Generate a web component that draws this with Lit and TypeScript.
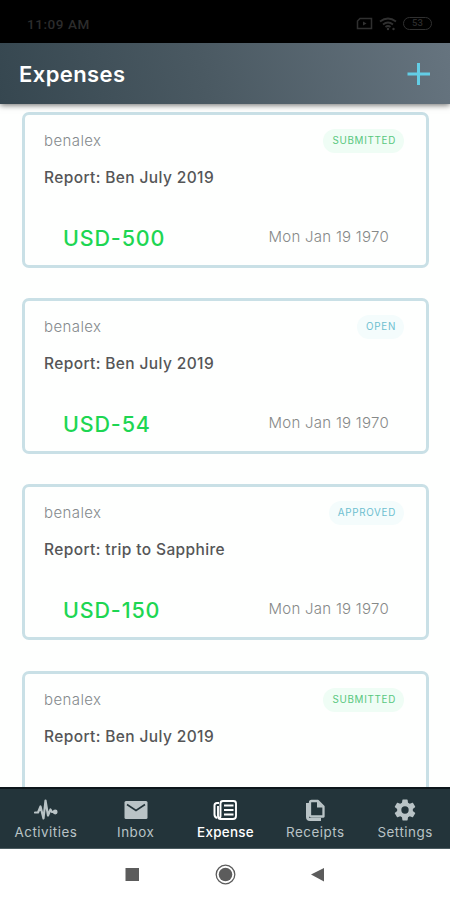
import { LitElement, html, css, svg, nothing } from "lit";
import { customElement, property } from "lit/decorators.js";

interface Expense {
  owner: string;
  title: string;
  amount?: string;
  date?: string;
  status: "SUBMITTED" | "OPEN" | "APPROVED";
}

const EXPENSES: Expense[] = [
  { owner: "benalex", title: "Report: Ben July 2019", amount: "USD-500", date: "Mon Jan 19 1970", status: "SUBMITTED" },
  { owner: "benalex", title: "Report: Ben July 2019", amount: "USD-54", date: "Mon Jan 19 1970", status: "OPEN" },
  { owner: "benalex", title: "Report: trip to Sapphire", amount: "USD-150", date: "Mon Jan 19 1970", status: "APPROVED" },
  { owner: "benalex", title: "Report: Ben July 2019", status: "SUBMITTED" },
];

@customElement("expense-card")
class ExpenseCard extends LitElement {
  @property({ attribute: false }) item!: Expense;

  static styles = css`
    :host {
      display: block;
      box-sizing: border-box;
      height: 156px;
      flex: none;
      border: 3px solid #c9e0e6;
      border-radius: 7px;
      background: #fefffe;
      padding: 14px 22px 0 19px;
    }
    .row {
      display: flex;
      justify-content: space-between;
      align-items: center;
    }
    .top { height: 24px; }
    .owner {
      font-size: 15px;
      line-height: 24px;
      font-weight: 300;
      color: #858a8d;
      letter-spacing: 0.4px;
    }
    .badge {
      height: 24px;
      line-height: 24px;
      border-radius: 12px;
      padding: 0 8px 0 9px;
      font-size: 9.8px;
      font-weight: 400;
      letter-spacing: 0.72px;
    }
    .SUBMITTED { color: #57c77e; background: #effdf5; }
    .OPEN, .APPROVED { color: #6dbfd0; background: #f4fcfc; }
    .title {
      margin-top: 15px;
      height: 20px;
      line-height: 20px;
      font-size: 15.5px;
      font-weight: 500;
      color: #555657;
      letter-spacing: 0.38px;
    }
    .bottom {
      margin-top: 34px;
      height: 30px;
      padding: 0 15px 0 19px;
    }
    .amount {
      font-size: 21.5px;
      line-height: 26px;
      padding-top: 1px;
      font-weight: 500;
      color: #1dd652;
      letter-spacing: 0.85px;
    }
    .date {
      font-size: 15px;
      line-height: 24px;
      font-weight: 300;
      color: #868988;
      letter-spacing: 0.27px;
    }
  `;

  render() {
    const e = this.item;
    return html`
      <div class="row top">
        <span class="owner">${e.owner}</span>
        <span class="badge ${e.status}">${e.status}</span>
      </div>
      <div class="title">${e.title}</div>
      ${e.amount
        ? html`<div class="row bottom">
            <span class="amount">${e.amount}</span>
            <span class="date">${e.date}</span>
          </div>`
        : nothing}
    `;
  }
}

const TABS = [
  {
    label: "Activities",
    icon: svg`<path d="M1 14.500H4L6.500 8.500L9.500 20.500L11.500 2.500L14 17.500L16.500 11.500L18 14H20" fill="none" stroke="currentColor" stroke-width="2.200" stroke-linejoin="round" stroke-linecap="round"/><circle cx="21.200" cy="14" r="2.400" fill="currentColor"/>`,
  },
  {
    label: "Inbox",
    icon: svg`<rect x=".5" y="3" width="23" height="18" rx="1.5" fill="currentColor"/><path d="M3 6.500L12 12.500L21 6.500" fill="none" stroke="#23343a" stroke-width="1.600"/>`,
  },
  {
    label: "Expense",
    icon: svg`<path d="M6 5H4Q1.500 5 1.500 7.500V16.500Q1.500 19 4 20" fill="none" stroke="currentColor" stroke-width="2"/><path d="M5 8V18Q5 21 7.500 21H20Q23 21 23 18V5.500Q23 3 20.500 3H10Q7.500 3 7.500 5.500V18Q7.500 20 6 20" fill="none" stroke="currentColor" stroke-width="1.900"/><path d="M11 7.500H20.500M11 12H20.500M11 16.500H20.500" fill="none" stroke="currentColor" stroke-width="1.900"/>`,
  },
  {
    label: "Receipts",
    icon: svg`<path d="M8.500 3H15L20.500 8.500V18.500H8.500Q7 18.500 7 17V4.500Q7 3 8.500 3Z" fill="none" stroke="currentColor" stroke-width="2.300" stroke-linejoin="round"/><path d="M14 3V9.500H20.500Z" fill="currentColor"/><path d="M4.500 5V19Q4.500 21.500 7 21.500H18" fill="none" stroke="currentColor" stroke-width="3"/>`,
  },
  {
    label: "Settings",
    icon: svg`<path fill="currentColor" fill-rule="evenodd" transform="translate(-.6 -.6) scale(1.05)" d="M19.430 12.980c.040-.320.070-.640.070-.980s-.030-.660-.070-.980l2.110-1.650c.190-.150.240-.420.120-.640l-2-3.460c-.120-.220-.390-.300-.610-.220l-2.490 1c-.520-.400-1.080-.730-1.690-.980l-.380-2.650C14.460 2.180 14.250 2 14 2h-4c-.250 0-.460.180-.490.420l-.380 2.650c-.610.250-1.170.590-1.690.980l-2.490-1c-.230-.090-.490 0-.610.220l-2 3.460c-.130.220-.070.490.120.640l2.110 1.650c-.040.320-.070.650-.070.980s.030.660.070.980l-2.110 1.650c-.190.150-.240.420-.120.640l2 3.460c.120.220.390.300.610.220l2.490-1c.520.400 1.080.730 1.690.980l.380 2.650c.030.240.240.420.490.420h4c.250 0 .460-.180.490-.420l.380-2.650c.610-.250 1.170-.590 1.690-.980l2.490 1c.230.090.490 0 .610-.220l2-3.460c.120-.220.070-.490-.120-.640l-2.110-1.650zM12 15.500a3.500 3.500 0 1 1 0-7a3.500 3.500 0 0 1 0 7z"/>`,
  },
];

@customElement("app-root")
class AppRoot extends LitElement {
  static styles = css`
    :host {
      display: flex;
      flex-direction: column;
      width: 450px;
      height: 900px;
      overflow: hidden;
      background: #fefffe;
      font-family: Inter, Roboto, sans-serif;
    }
    svg { display: block; }
    .status {
      flex: none;
      box-sizing: border-box;
      height: 43px;
      padding: 4px 18px 0 27px;
      background: #000;
      color: #2c2c2c;
      display: flex;
      align-items: center;
      justify-content: space-between;
      font: 500 13.5px Roboto, sans-serif;
      letter-spacing: 0.55px;
    }
    .indicators { display: flex; align-items: center; gap: 6px; }
    .battery {
      box-sizing: border-box;
      width: 29px;
      height: 13px;
      border: 1.5px solid #303030;
      border-radius: 7px;
      font-size: 9.5px;
      line-height: 10.5px;
      letter-spacing: 0.2px;
      text-align: center;
    }
    .header {
      flex: none;
      z-index: 1;
      box-sizing: border-box;
      height: 61px;
      padding: 1px 20px 0 19px;
      background: linear-gradient(75deg, #364750 0%, #4a5962 45%, #66747f 100%);
      box-shadow: 0 1px 6px rgba(0, 0, 0, 0.6);
      display: flex;
      align-items: center;
      justify-content: space-between;
    }
    .heading {
      margin: 0;
      font-size: 22px;
      font-weight: 600;
      color: #fff;
      letter-spacing: 0.4px;
    }
    .list {
      flex: 1;
      min-height: 0;
      overflow: hidden;
      padding: 8px 21px 0 22px;
      display: flex;
      flex-direction: column;
      gap: 30.2px;
    }
    .tabs {
      flex: none;
      box-sizing: border-box;
      height: 62px;
      border-top: 2px solid #0d171b;
      border-bottom: 1px solid #4b5b60;
      background: #23343a;
      display: grid;
      grid-template-columns: repeat(5, 1fr);
      padding-left: 1px;
    }
    .tab {
      display: flex;
      flex-direction: column;
      align-items: center;
      padding-top: 9px;
      color: #b9c3c6;
      font-size: 13.4px;
      line-height: 16px;
      letter-spacing: 0.5px;
      gap: 2px;
    }
    .tab.active { color: #fff; font-weight: 500; letter-spacing: 0.3px; }
    .system {
      flex: none;
      height: 51px;
      background: #fff;
      display: flex;
      align-items: center;
      justify-content: center;
    }
  `;

  render() {
    return html`
      <div class="status">
        <span>11:09 AM</span>
        <div class="indicators">
          <svg width="17" height="13" viewBox="0 0 17 13" fill="none" stroke="#303030" stroke-width="1.500"><path d="M4 1.500H15.500V11.500H1.500V4Z"/><path d="M7 4.500L10.500 6.500L7 8.500Z" fill="#333" stroke="none"/></svg>
          <svg width="18" height="14" viewBox="0 0 18 14" fill="none" stroke="#303030" stroke-width="1.800"><path d="M1 4.500Q9 -1.500 17 4.500M4 7.500Q9 3.500 14 7.500M6.500 10Q9 8 11.500 10"/><circle cx="9" cy="12" r="1.200" fill="#333" stroke="none"/><circle cx="14.500" cy="12" r="1.200" fill="#333" stroke="none"/></svg>
          <div class="battery">53</div>
        </div>
      </div>
      <div class="header">
        <h1 class="heading">Expenses</h1>
        <svg width="24" height="24" viewBox="0 0 24 24"><path d="M12.500 1V23M1.500 12H24" fill="none" stroke="#63cde5" stroke-width="3"/></svg>
      </div>
      <div class="list">
        ${EXPENSES.map((item) => html`<expense-card .item=${item}></expense-card>`)}
      </div>
      <div class="tabs">
        ${TABS.map(
          (t) => html`<div class="tab ${t.label === "Expense" ? "active" : ""}">
            <svg width="24" height="24" viewBox="0 0 24 24">${t.icon}</svg>
            <span>${t.label}</span>
          </div>`
        )}
      </div>
      <div class="system">
        <svg width="200" height="22" viewBox="0 0 200 22" fill="#5c5c5c">
          <rect x="0.500" y="4" width="13.500" height="13"/>
          <circle cx="100.500" cy="10.500" r="9.300" fill="none" stroke="#5c5c5c" stroke-width="1.300"/>
          <circle cx="100.500" cy="10.500" r="6.800"/>
          <path d="M186 10.500L199 4V17.500Z"/>
        </svg>
      </div>
    `;
  }
}
